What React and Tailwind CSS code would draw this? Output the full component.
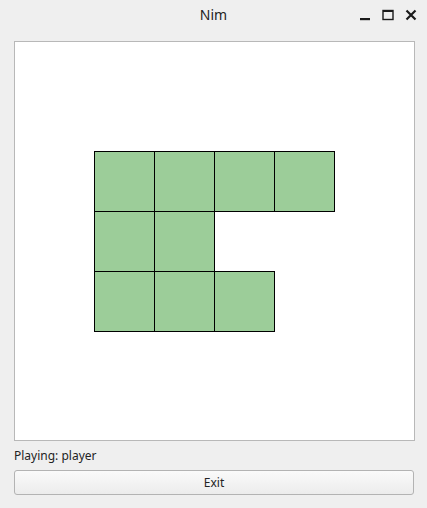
import React from 'react';

const rows = [4, 2, 3];

const Cell = () => (
  <div className="w-[61px] h-[61px] -ml-px first:ml-0 border border-black bg-[#9ccd99]" />
);

export default function App() {
  return (
    <div className="w-[427px] h-[508px] bg-[#efefef] font-['Noto_Sans',sans-serif] text-[#232323] flex flex-col">
      {/* title bar */}
      <div className="relative h-[31px] flex items-center justify-center text-[14px]">
        <span className="mt-[-2px]">Nim</span>
        <div className="absolute right-[10px] top-[9px] flex items-center gap-[11px]">
          <svg width="12" height="12" viewBox="0 0 12 12">
            <rect x="1" y="9" width="10" height="2.2" fill="#1a1a1a" />
          </svg>
          <svg width="12" height="12" viewBox="0 0 12 12">
            <rect x="1" y="1.5" width="10" height="9" fill="none" stroke="#1a1a1a" strokeWidth="1.4" />
            <rect x="1" y="1" width="10" height="2" fill="#1a1a1a" />
          </svg>
          <svg width="12" height="12" viewBox="0 0 12 12">
            <path d="M1.5 1.5 L10.5 10.5 M10.5 1.5 L1.5 10.5" stroke="#1a1a1a" strokeWidth="2.2" />
          </svg>
        </div>
      </div>

      {/* board */}
      <div className="mx-[14px] mt-[10px] w-[401px] h-[400px] border border-[#b8b8b8] bg-white pt-[109px] pl-[79px]">
        {rows.map((n, r) => (
          <div key={r} className="flex -mt-px first:mt-0">
            {Array.from({ length: n }).map((_, i) => (
              <Cell key={i} />
            ))}
          </div>
        ))}
      </div>

      <div className="mx-[14px] mt-[6px] text-[12px] leading-[17px]">Playing: player</div>

      <button className="mx-[14px] mt-[6px] w-[400px] h-[25px] rounded-[3px] border border-[#b3b3b3] bg-gradient-to-b from-[#fafafa] to-[#ececec] text-[12px] text-[#232323]">
        Exit
      </button>
    </div>
  );
}
